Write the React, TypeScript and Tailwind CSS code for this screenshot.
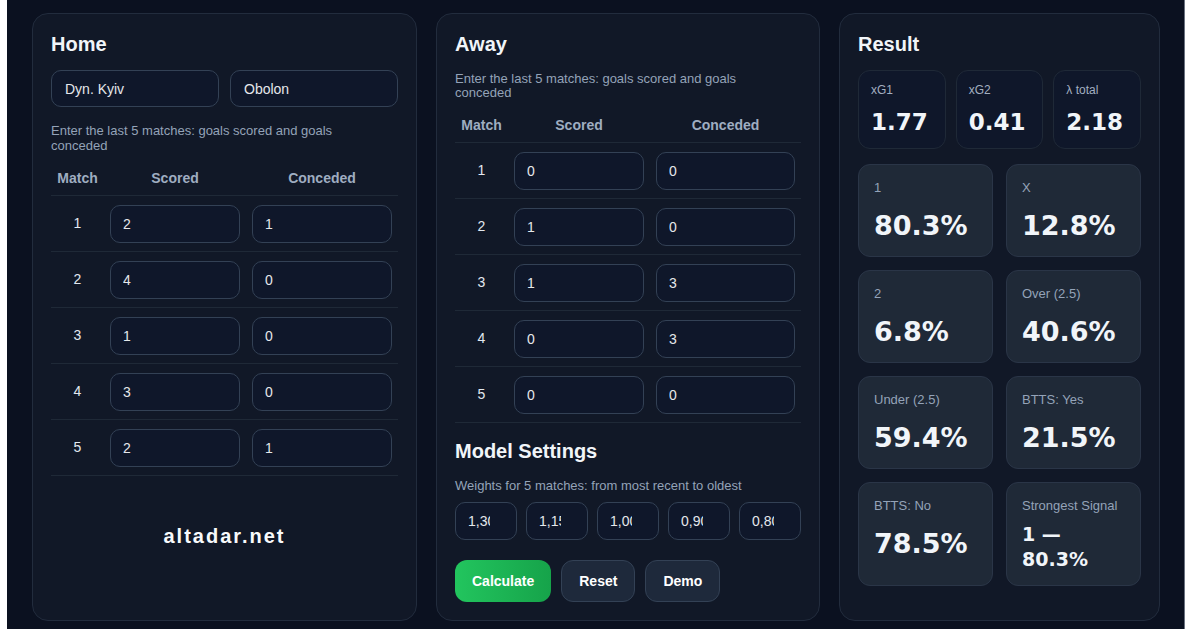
import React from "react";

const homeRows = [
  [2, 1],
  [4, 0],
  [1, 0],
  [3, 0],
  [2, 1],
];

const awayRows = [
  [0, 0],
  [1, 0],
  [1, 3],
  [0, 3],
  [0, 0],
];

const weights = ["1,30", "1,15", "1,00", "0,90", "0,80"];

const stats = [
  { label: "1", value: "80.3%" },
  { label: "X", value: "12.8%" },
  { label: "2", value: "6.8%" },
  { label: "Over (2.5)", value: "40.6%" },
  { label: "Under (2.5)", value: "59.4%" },
  { label: "BTTS: Yes", value: "21.5%" },
  { label: "BTTS: No", value: "78.5%" },
];

const inputCls =
  "w-full rounded-[10px] border border-[#334155] bg-[#0f172a] text-[14px] text-[#e5e7eb] outline-none";

function Panel({ children }: { children: React.ReactNode }) {
  return (
    <section className="flex flex-col rounded-2xl border border-[#222c3d] bg-[#111827] p-[18px]">
      {children}
    </section>
  );
}

function Title({ children }: { children: React.ReactNode }) {
  return <h2 className="text-[20px] font-bold leading-[24px] text-[#f1f5f9]">{children}</h2>;
}

function MatchTable({ rows }: { rows: number[][] }) {
  return (
    <div className="text-[14px]">
      <div className="grid h-[35px] grid-cols-[53px_142px_1fr] items-center border-b border-[#1f2937] font-bold text-[#9fadc1]">
        <div className="text-center">Match</div>
        <div className="text-center">Scored</div>
        <div className="text-center">Conceded</div>
      </div>
      {rows.map((r, i) => (
        <div
          key={i}
          className="grid h-[56px] grid-cols-[53px_142px_1fr] items-center border-b border-[#1f2937]"
        >
          <div className="text-center text-[#e2e8f0]">{i + 1}</div>
          <div className="px-[6px]">
            <input className={`${inputCls} h-[38px] px-3`} defaultValue={r[0]} />
          </div>
          <div className="px-[6px]">
            <input className={`${inputCls} h-[38px] px-3`} defaultValue={r[1]} />
          </div>
        </div>
      ))}
    </div>
  );
}

function SmallStat({ label, value }: { label: string; value: string }) {
  return (
    <div className="rounded-xl border border-[#1f2937] bg-[#0f172a] px-[12px] pb-[11px] pt-[12px]">
      <div className="text-[12px] leading-[15px] text-[#a3afc0]">{label}</div>
      <div className="mt-[10px] font-['DejaVu_Sans',sans-serif] text-[23px] font-bold leading-[29px] text-[#f1f5f9]">
        {value}
      </div>
    </div>
  );
}

function BigStat({ label, value }: { label: string; value: string }) {
  return (
    <div className="rounded-xl border border-[#2a3547] bg-[#1f2937] px-[15px] pb-[13px] pt-[15px]">
      <div className="text-[13px] leading-[16px] text-[#94a3b8]">{label}</div>
      <div className="mt-[13px] font-['DejaVu_Sans',sans-serif] text-[27px] font-bold leading-[34px] text-[#f1f5f9]">
        {value}
      </div>
    </div>
  );
}

export default function App() {
  return (
    <div className="flex h-[629px] w-[1200px] bg-white font-['Liberation_Sans',Arial,sans-serif]">
      <div className="ml-[7px] h-full w-[1178px] border-r border-[#6b7280] bg-[#0b1120] pl-[25px] pt-[13px]">
        <div className="grid grid-cols-[385px_384px_321px] gap-x-[19px]">
          <Panel>
            <Title>Home</Title>
            <div className="mt-[14px] grid grid-cols-2 gap-[11px]">
              <input className={`${inputCls} h-[37px] px-[13px]`} defaultValue="Dyn. Kyiv" />
              <input className={`${inputCls} h-[37px] px-[13px]`} defaultValue="Obolon" />
            </div>
            <p className="mt-[16px] max-w-[320px] text-[13px] leading-[15px] text-[#94a3b8]">
              Enter the last 5 matches: goals scored and goals conceded
            </p>
            <div className="mt-[8px]">
              <MatchTable rows={homeRows} />
            </div>
            <div className="mt-[48px] text-center text-[20px] font-bold leading-[24px] tracking-[2px] text-[#f8fafc]">
              altadar.net
            </div>
          </Panel>

          <Panel>
            <Title>Away</Title>
            <p className="mt-[16px] max-w-[320px] text-[13px] leading-[14px] text-[#94a3b8]">
              Enter the last 5 matches: goals scored and goals conceded
            </p>
            <div className="mt-[8px]">
              <MatchTable rows={awayRows} />
            </div>
            <h3 className="mt-[16px] text-[20px] font-bold leading-[24px] text-[#f1f5f9]">Model Settings</h3>
            <p className="mt-[15px] text-[13px] leading-[15px] text-[#94a3b8]">
              Weights for 5 matches: from most recent to oldest
            </p>
            <div className="mt-[9px] grid grid-cols-5 gap-[9px]">
              {weights.map((w) => (
                <input key={w} className={`${inputCls} h-[38px] pl-3 pr-[26px]`} defaultValue={w} />
              ))}
            </div>
            <div className="mt-[20px] flex gap-[10px]">
              <button className="h-[42px] rounded-xl bg-gradient-to-r from-[#22c55e] to-[#16a34a] px-[17px] text-[14px] font-bold text-white">
                Calculate
              </button>
              <button className="h-[42px] rounded-xl border border-[#334155] bg-[#1e293b] px-[17px] text-[14px] font-bold text-white">
                Reset
              </button>
              <button className="h-[42px] rounded-xl border border-[#334155] bg-[#1e293b] px-[17px] text-[14px] font-bold text-white">
                Demo
              </button>
            </div>
          </Panel>

          <Panel>
            <Title>Result</Title>
            <div className="mt-[14px] grid grid-cols-3 gap-[10px]">
              <SmallStat label="xG1" value="1.77" />
              <SmallStat label="xG2" value="0.41" />
              <SmallStat label="λ total" value="2.18" />
            </div>
            <div className="mt-[15px] grid grid-cols-2 gap-[13px]">
              {stats.map((s) => (
                <BigStat key={s.label} label={s.label} value={s.value} />
              ))}
              <div className="rounded-xl border border-[#2a3547] bg-[#1f2937] px-[15px] pb-[13px] pt-[15px]">
                <div className="text-[13px] leading-[16px] text-[#94a3b8]">Strongest Signal</div>
                <div className="mt-[8px] font-['DejaVu_Sans',sans-serif] text-[19px] font-bold leading-[25px] text-[#f1f5f9]">
                  1 — 80.3%
                </div>
              </div>
            </div>
          </Panel>
        </div>
      </div>
    </div>
  );
}
